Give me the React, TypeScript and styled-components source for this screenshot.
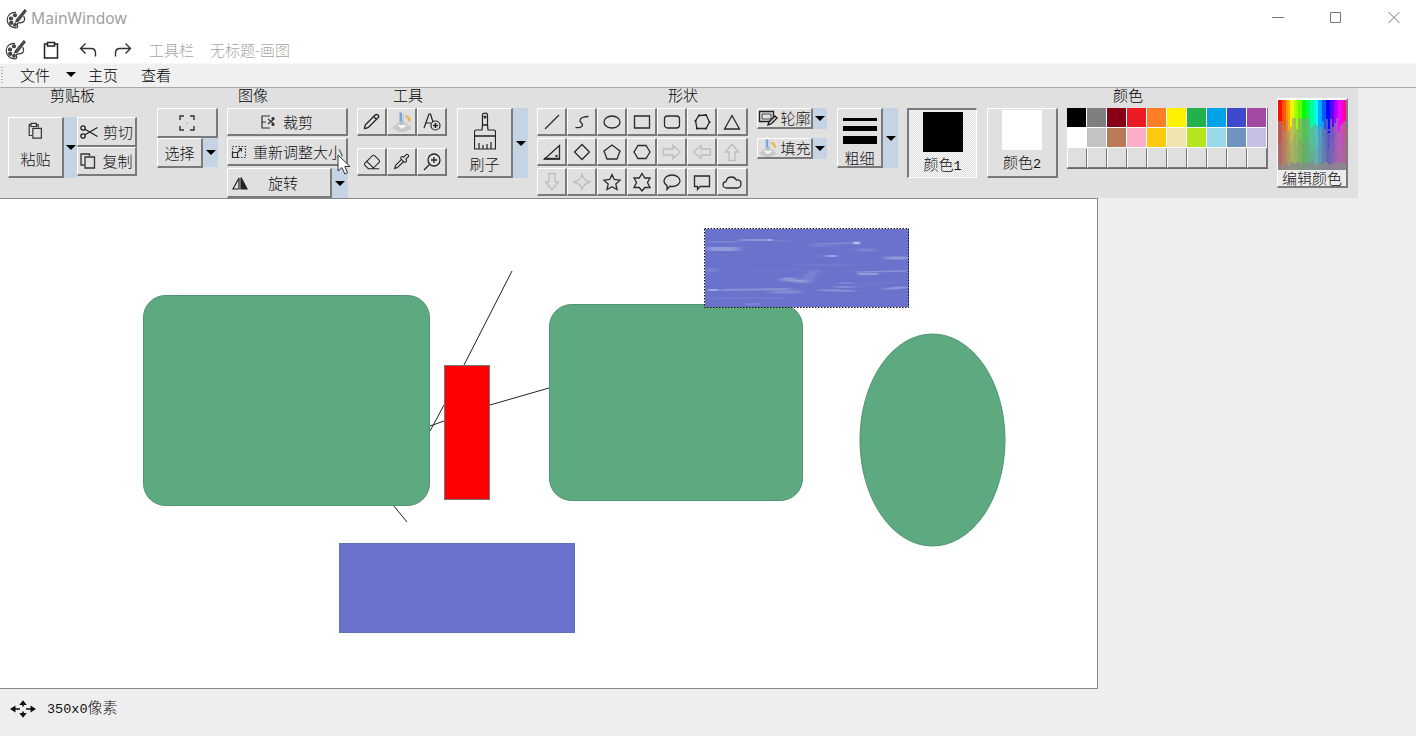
import React from "react";
import styled, { createGlobalStyle } from "styled-components";
import { Eraser, Pencil, Pipette } from "lucide-react";

const Global = createGlobalStyle`
  html, body { margin: 0; padding: 0; background: #eeeeee; }
  * { box-sizing: border-box; }
  body { font-family: "Noto Sans CJK SC", "Liberation Sans", sans-serif; font-size: 15px; font-weight: 300; color: #000; }
`;

const Page = styled.div`
  width: 1416px; height: 736px; overflow: hidden;
  display: flex; flex-direction: column; background: #eeeeee;
`;
const TitleBar = styled.header`
  height: 36px; background: #fff; display: flex; align-items: center;
  padding: 0 16px 0 6px; flex: none;
`;
const WinTitle = styled.span`
  font-family: "Noto Sans", "Liberation Sans", sans-serif; font-size: 15.6px; font-weight: 400;
  color: #a0a0a0; margin-left: 4px;
`;
const WinControls = styled.div`
  margin-left: auto; display: flex; gap: 46px; align-items: center; color: #777;
`;
const QuickBar = styled.div`
  height: 27px; background: #fff; display: flex; align-items: center; flex: none;
  padding-left: 5px;
`;
const QuickIcon = styled.span<{ $ml: number }>`
  display: flex; margin-left: ${p => p.$ml}px;
`;
const QuickText = styled.span<{ $ml: number }>`
  color: #a5a5a5; margin-left: ${p => p.$ml}px; line-height: 20px; white-space: nowrap; font-size: 15px;
`;
const MenuBar = styled.nav`
  height: 25px; background: #f0f0f0; border-bottom: 1px solid #a9a9a9; display: flex;
  align-items: center; flex: none; position: relative; padding: 0 0 2px 20px;
  border-top: 1px solid #f8f8f8;
`;
const Grip = styled.span`
  width: 2px; height: 16px; margin-left: -19px; margin-right: 17px;
  background: repeating-linear-gradient(to bottom, #b5b5b5 0 1px, transparent 1px 3px);
`;
const MenuItem = styled.span<{ $w: number }>`
  width: ${p => p.$w}px; display: flex; align-items: center; line-height: 20px; font-size: 15px; flex: none;
`;
const Arrow = styled.i`
  display: block; width: 0; height: 0; flex: none;
  border-left: 5px solid transparent; border-right: 5px solid transparent; border-top: 5px solid #000;
`;
const MenuArrow = styled(Arrow)`
  margin-left: 16px;
`;
const Ribbon = styled.section`
  width: 1358px; height: 110px; background: #e1e0e1; display: flex; padding-left: 8px; flex: none;
`;
const Group = styled.div<{ $w: number; $top?: number }>`
  width: ${p => p.$w}px; flex: none; padding-top: ${p => p.$top ?? 0}px;
`;
const GroupTitle = styled.div<{ $x?: number }>`
  height: 14px; line-height: 14px; margin-bottom: 6px; margin-left: ${p => p.$x ?? 0}px;
  font-size: 15px; white-space: nowrap;
`;
const Btn = styled.div<{ $w: number; $h: number; $col?: boolean; $gap?: number; $pt?: number }>`
  width: ${p => p.$w}px; height: ${p => p.$h}px; flex: none;
  display: flex; flex-direction: ${p => (p.$col ? "column" : "row")};
  align-items: center; justify-content: ${p => (p.$pt !== undefined ? "flex-start" : "center")};
  padding-top: ${p => p.$pt ?? 0}px; gap: ${p => p.$gap ?? 0}px;
  background: #e1e0e1; line-height: 18px; white-space: nowrap; font-size: 15px;
  border-top: 1px solid #fff; border-left: 1px solid #fff;
  border-right: 2px solid #7a7a7a; border-bottom: 2px solid #7a7a7a;
  color: #111;
  position: relative;
`;
const Drop = styled.div<{ $w?: number; $h: number }>`
  width: ${p => p.$w ?? 15}px; height: ${p => p.$h}px; flex: none; background: #c5d4e4;
  display: flex; align-items: center; justify-content: center;
`;
const Row = styled.div<{ $gap?: number; $mt?: number }>`
  display: flex; gap: ${p => p.$gap ?? 0}px; padding-top: ${p => p.$mt ?? 0}px;
`;
const Stack = styled.div<{ $gap?: number }>`
  display: flex; flex-direction: column; gap: ${p => p.$gap ?? 0}px;
`;
const RotateLabel = styled.span`
  margin-left: 20px;
`;
const RotateBtn = styled(Btn)`
  justify-content: flex-start; padding-left: 4px;
`;
const CursorMark = styled.svg`
  position: absolute; left: 109px; top: 15px; z-index: 3;
`;
const Mono = styled.span`
  font-family: "Liberation Mono", monospace; font-size: 13.5px; font-weight: 400;
`;
const ColorBtn = styled.div<{ $on?: boolean }>`
  width: ${p => (p.$on ? 70 : 71)}px; height: 70px; display: flex; flex-direction: column; align-items: center;
  line-height: 18px; font-size: 15px; color: #111;
  ${p => p.$on
    ? `border-top: 2px solid #7a7a7a; border-left: 2px solid #7a7a7a; border-right: 1px solid #fff; border-bottom: 1px solid #fff;
       background: repeating-conic-gradient(#fff 0 25%, #dadada 0 50%) 0 0 / 2px 2px; padding-top: 2px;`
    : `border-top: 1px solid #fff; border-left: 1px solid #fff; border-right: 2px solid #7a7a7a; border-bottom: 2px solid #7a7a7a;
       background: #e1e0e1; padding-top: 1px;`}
`;
const ColorFill = styled.div<{ $c: string }>`
  width: 40px; height: 40px; background: ${p => p.$c}; margin-bottom: 3px; flex: none;
`;
const Palette = styled.div`
  width: 201px; display: grid; grid-template-columns: repeat(10, 20px); grid-auto-rows: 20px;
  border-bottom: 1px solid #666; height: 61px; border-right: 1px solid #777;
`;
const Swatch = styled.div<{ $c: string; $blank?: boolean }>`
  background: ${p => p.$c};
  border-right: 1px solid #fff; border-bottom: 1px solid #fff;
  ${p => p.$blank && "border-left: 1px solid #fff; border-top: 1px solid #e0dfe0; border-right: 1px solid #777; border-bottom: 1px solid #777;"}
`;
const EditBtn = styled.div`
  width: 71px; height: 90px; background: #e1e0e1; display: flex; flex-direction: column;
  border-top: 2px solid #fff; border-left: 1px solid #fff; border-right: 2px solid #7a7a7a; border-bottom: 2px solid #7a7a7a;
`;
const RainbowImg = styled.svg`
  display: block; flex: none;
`;
const EditLabel = styled.div`
  flex: 1; text-align: center; line-height: 16px; font-size: 15px; color: #111; background: #ececec;
`;
const Canvas = styled.main`
  width: 1098px; height: 491px; background: #fff; flex: none;
  border-top: 1px solid #8a8a8a; border-right: 1px solid #8a8a8a; border-bottom: 1px solid #8a8a8a;
`;
const Drawing = styled.svg`
  display: block;
`;
const StatusBar = styled.footer`
  flex: 1; display: flex; align-items: center; padding: 0 0 8px 10px; background: #eeeeee; font-size: 15px; color: #111;
`;
const StatusText = styled.span`
  margin-left: 11px; line-height: 20px;
`;
const Lines = styled.svg`
  display: block; flex: none;
`;

const S = "#2a2a2a";
const G = "#bcbcbc";

const AppIcon = ({ size = 21 }: { size?: number }) => (
  <svg width={size} height={size} viewBox="0 0 21 21" fill="none" stroke="#3a3a3a" strokeWidth="1.200">
    <path d="M10 4.500C5 3.800 1.200 7.200 1.200 11.800c0 4.500 3.800 8 8.300 8 2 0 2.600-1.200 2-2.500-.6-1.500.3-2.600 1.800-2.500 2.800.2 5.300-.8 5.300-3.600 0-1.200-.4-2.200-1-3" fill="#f7f7f7" />
    <circle cx="5" cy="10.500" r="1.500" fill="#555" />
    <circle cx="5.200" cy="14.800" r="1.500" fill="#555" />
    <circle cx="9" cy="7.300" r="1.400" fill="#555" />
    <circle cx="9" cy="16.800" r="1.300" fill="#555" />
    <path d="M10.500 11.800 18.800 1.800l1.300 1.200-7.700 10-2.600.9z" fill="#666" />
  </svg>
);

const dots = (pts: [number, number][]) => <>{pts.map(([x, y], i) => <circle key={i} cx={x} cy={y} r="1.100" fill="#222" stroke="none" />)}</>;

const shapeIcons: { d: string; muted?: boolean; extra?: React.ReactNode }[] = [
  { d: "M3 17 17 3" },
  { d: "M3.500 15.500c3 .5 7 0 7-2.500 0-2-2.500-2-2.500-4.500C8 6 12 4.500 16.500 4.500" },
  { d: "M2 10a8 6 0 1 0 16 0a8 6 0 1 0-16 0z" },
  { d: "M2.500 4h15v12h-15z" },
  { d: "M5.500 4h9a3 3 0 0 1 3 3v6a3 3 0 0 1-3 3h-9a3 3 0 0 1-3-3V7a3 3 0 0 1 3-3z" },
  { d: "M7 3.500 14 3 17.500 10 14 16.500 5 16.500 3.500 9z", extra: dots([[7, 3.5], [14, 3], [17.5, 10], [14, 16.5], [5, 16.5], [3.5, 9]]) },
  { d: "M10 3.500 17.500 17h-15z" },
  { d: "M17.500 3.500v13.500H2.500z", extra: <><path d="M2 16.700h16" strokeWidth="1.800" /><circle cx="14.500" cy="14" r="1.300" fill="#444" stroke="none" /></> },
  { d: "M10 2.500 17.500 10 10 17.500 2.500 10z" },
  { d: "M10 3 18 9 15 17H5L2 9z" },
  { d: "M6 3.500h8L18 10l-4 6.500H6L2 10z" },
  { d: "M1.500 7h9.500V3.500L18.500 10 11 16.500V13H1.500z", muted: true },
  { d: "M18.500 7H9V3.500L1.500 10 9 16.500V13h9.500z", muted: true },
  { d: "M7 18.500V10H3.500L10 2l6.500 8H13v8.500z", muted: true },
  { d: "M7 1.500V10H3.500L10 18l6.500-8H13V1.500z", muted: true },
  { d: "M10 1.500Q11 9 18.500 10 11 11 10 18.500 9 11 1.500 10 9 9 10 1.500z", muted: true },
  { d: "M10 2.500 12.300 7.500 18 8.200 13.800 12 15 17.500 10 14.800 5 17.500 6.200 12 2 8.200 7.700 7.500z" },
  { d: "M10 1.500 12.800 6H18L15.500 10.500 18 15.500H12.800L10 19 7.200 15.500H2L4.500 10.500 2 6H7.200z" },
  { d: "M10 3c4.500 0 8 2.500 8 5.800 0 3.200-3.500 5.700-8 5.700-.8 0-1.500 0-2.200-.2L5 17.500v-4C3 12.400 2 10.800 2 8.800 2 5.500 5.500 3 10 3z" },
  { d: "M2.500 4h15v10.500H8L5.500 17.500v-3h-3z" },
  { d: "M4.500 16C2.500 16 1 14.500 1 12.800c0-1.700 1.300-3 3-3.100.5-2.700 2.800-4.700 5.500-4.700 2.200 0 4 1.200 4.800 3 .4-.1.800-.1 1.200-.1 2.200 0 3.500 1.700 3.500 3.900 0 2.300-1.500 4.200-3.500 4.200z" },
];

const ShapeIcon = ({ d, muted, extra }: { d: string; muted?: boolean; extra?: React.ReactNode }) => (
  <svg width="20" height="20" viewBox="0 0 20 20" fill="none" stroke={muted ? G : S} strokeWidth="1.300">
    <path d={d} />
    {extra}
  </svg>
);

const FillIcon = ({ w = 22 }: { w?: number }) => (
  <svg width={w} height={w} viewBox="0 0 22 22" fill="none">
    <path d="M1 17 7 12h8l6 5-7 4H8z" fill="#c9c9c9" />
    <path d="M6 14h10l-5 4z" fill="#f6f6f6" />
    <path d="M8.500 1.500H11V10H8.500z" fill="#7fa4d8" />
    <path d="M11 2.500h2V10h-2z" fill="#c3d2e8" />
    <path d="M14.500 5c2.500.8 4 2.800 4.300 5.500" stroke="#e9b94a" strokeWidth="2.400" />
    <path d="M7.500 10h6l-3 4z" fill="#aeb9ca" />
  </svg>
);

function hash(n: number) {
  const x = Math.sin(n * 127.1 + 11.7) * 43758.5453;
  return x - Math.floor(x);
}
const rainbowCells: { x: number; y: number; c: string }[] = [];
for (let cx = 0; cx < 34; cx++) {
  const jitter = (hash(cx) - 0.5) * 0.24;
  for (let cy = 0; cy < 36; cy++) {
    const t = cy / 36 + jitter + (hash(cx * 100 + Math.floor(cy / 4)) - 0.5) * 0.08;
    const hue = (Math.floor(cx / 2) * 2 / 34) * 340 + (hash(cx + 50) - 0.5) * 10;
    const bottom = cy / 36 > 0.92 - hash(cx + 300) * 0.06;
    const sat = bottom ? 6 : t < 0.34 ? 98 : t < 0.62 ? 46 : 33;
    const light = bottom ? 54 : t < 0.34 ? 50 : 54;
    rainbowCells.push({ x: cx * 2, y: cy * 2, c: `hsl(${hue.toFixed(0)} ${sat}% ${light}%)` });
  }
}

const colors = [
  "#000000", "#7f7f7f", "#880015", "#ed1c24", "#ff7f27", "#fff200", "#22b14c", "#00a2e8", "#3f48cc", "#a349a4",
  "#ffffff", "#c3c3c3", "#b97a57", "#ffaec9", "#ffc90e", "#efe4b0", "#b5e61d", "#99d9ea", "#7092be", "#c8bfe7",
];

const soft: [number, number, number, number, number, number][] = [
  [706, 242, 738, 242, 2, 0.15], [740, 240, 772, 240, 1.5, 0.45], [772, 241, 790, 241, 1, 0.15],
  [708, 249, 738, 249, 4, 0.4], [815, 244, 853, 243, 1.5, 0.25],
  [806, 246, 836, 246, 1, 0.2], [826, 256, 835, 256, 2, 0.5], [857, 250, 875, 250, 3, 0.2],
  [886, 258, 908, 258, 3, 0.4], [856, 272, 908, 271, 1.5, 0.3], [782, 279, 806, 282, 3, 0.4], [805, 282, 815, 270, 4, 0.35],
  [720, 290, 790, 289, 2, 0.3], [770, 292, 800, 292, 3, 0.25], [820, 290, 854, 291, 2, 0.3], [835, 287, 854, 287, 2, 0.25],
  [885, 289, 908, 287, 2, 0.4], [710, 298, 790, 298, 1, 0.12], [706, 270, 716, 270, 4, 0.2], [800, 265, 854, 265, 1, 0.15],
  [840, 283, 854, 283, 1.5, 0.25], [745, 270, 800, 270, 1, 0.1], [860, 285, 900, 282, 1, 0.12],
];
const bright: [number, number, number, number, number, number][] = [
  [767, 240, 771, 240, 1, 0.8], [853, 243, 860, 243, 2.500, 0.6], [830, 256, 835, 256, 1, 0.4], [858, 274, 878, 274, 1, 0.65],
  [784, 278, 795, 278, 1, 0.25], [708, 290, 718, 290, 1, 0.8], [746, 304, 760, 304, 1, 0.3],
];

export default function App() {
  return (
    <Page>
      <Global />
      <TitleBar>
        <AppIcon />
        <WinTitle>MainWindow</WinTitle>
        <WinControls>
          <svg width="12" height="12" viewBox="0 0 12 12" stroke="currentColor"><path d="M0 5.500h12" /></svg>
          <svg width="12" height="12" viewBox="0 0 12 12" fill="none" stroke="currentColor"><path d="M.5 .500h10v10H.5z" /></svg>
          <svg width="12" height="12" viewBox="0 0 12 12" fill="none" stroke="currentColor"><path d="M.5 0 11.500 11M11.500 0 .5 11" /></svg>
        </WinControls>
      </TitleBar>
      <QuickBar>
        <AppIcon />
        <QuickIcon $ml={17}>
          <svg width="16" height="18" viewBox="0 0 16 18" fill="none" stroke="#222" strokeWidth="1.500">
            <path d="M4.500 3H1.500v14h13V3h-3" />
            <path d="M4.500 1.500h7V5h-7z" />
          </svg>
        </QuickIcon>
        <QuickIcon $ml={20}>
          <svg width="18" height="16" viewBox="0 0 18 16" fill="none" stroke="#333" strokeWidth="1.400">
            <path d="M6.500 1.500 1.500 6.500l5 5M1.500 6.500H12c2.800 0 4.500 1.800 4.500 4.500v3.500" />
          </svg>
        </QuickIcon>
        <QuickIcon $ml={17}>
          <svg width="18" height="16" viewBox="0 0 18 16" fill="none" stroke="#333" strokeWidth="1.400">
            <path d="M11.500 1.500l5 5-5 5M16.500 6.500H6C3.200 6.500 1.500 8.300 1.500 11v3.500" />
          </svg>
        </QuickIcon>
        <QuickText $ml={17}>工具栏</QuickText>
        <QuickText $ml={16}>无标题-画图</QuickText>
      </QuickBar>
      <MenuBar>
        <Grip />
        <MenuItem $w={68}>文件<MenuArrow /></MenuItem>
        <MenuItem $w={53}>主页</MenuItem>
        <MenuItem $w={40}>查看</MenuItem>
      </MenuBar>
      <Ribbon>
        <Group $w={149}>
          <GroupTitle $x={42}>剪贴板</GroupTitle>
          <Row $mt={9}>
            <Btn $w={56} $h={61} $col $gap={10} $pt={4}>
              <svg width="15" height="18" viewBox="0 0 16 20" fill="none" stroke="#333" strokeWidth="1.300">
                <path d="M3 3H1v12h3" /><path d="M3 1.500h6V5H3zM9 3h2v3" /><path d="M5 7h9.500v11H5z" />
              </svg>
              粘贴
            </Btn>
            <Drop $w={13} $h={61}><Arrow /></Drop>
            <Stack>
              <Btn $w={60} $h={30} $gap={5}>
                <svg width="18" height="14" viewBox="0 0 18 14" fill="none" stroke="#222" strokeWidth="1.300">
                  <circle cx="3" cy="3" r="2.200" />
                  <circle cx="3" cy="11" r="2.200" />
                  <path d="M5 4.300 17.500 11.500M5 9.700 17.500 2.500" />
                </svg>
                剪切
              </Btn>
              <Btn $w={60} $h={29} $gap={6}>
                <svg width="16" height="16" viewBox="0 0 16 16" fill="none" stroke="#333" strokeWidth="1.300">
                  <path d="M9.500 3V1H1v11h3" /><path d="M5 4h9.500v11H5z" />
                </svg>
                复制
              </Btn>
            </Stack>
          </Row>
        </Group>
        <Group $w={200}>
          <GroupTitle $x={81}>图像</GroupTitle>
          <Row $gap={9}>
            <Stack>
              <Btn $w={61} $h={30}>
                <svg width="16" height="16" viewBox="0 0 16 16" fill="none" stroke="#333" strokeWidth="1.400">
                  <path d="M1 5V1h4M11 1h4v4M15 11v4h-4M5 15H1v-4" />
                  <path d="M7.500 8h1" stroke="#999" />
                </svg>
              </Btn>
              <Row>
                <Btn $w={46} $h={30}>选择</Btn>
                <Drop $h={29}><Arrow /></Drop>
              </Row>
            </Stack>
            <Stack $gap={2}>
              <Btn $w={121} $h={28} $gap={8}>
                <svg width="14" height="14" viewBox="0 0 14 14" fill="none" stroke="#333" strokeWidth="1.200">
                  <path d="M9 1H1v12h8M1 7h4" />
                  <path d="m7 4 6 5M7 9l6-5" />
                  <circle cx="12" cy="3.500" r="1" fill="#333" /><circle cx="12" cy="9.500" r="1" fill="#333" />
                </svg>
                裁剪
              </Btn>
              <Btn $w={121} $h={28} $gap={6}>
                <svg width="16" height="14" viewBox="0 0 16 14" fill="none" stroke="#333" strokeWidth="1.200">
                  <path d="M1.500 1.500h13v11h-13z" strokeDasharray="1.500 1.500" />
                  <path d="M1.500 7.500h5v5h-5z" />
                  <path d="M6 8l4-4M7.500 3.500H10.500V6.500" />
                </svg>
                重新调整大小
                <CursorMark width="14" height="22" viewBox="0 0 14 22">
                  <path d="M1 1v16l4-3.500 2.800 6.500 2.700-1.200L7.800 12.500H13z" fill="#fff" stroke="#333" strokeWidth="1" />
                </CursorMark>
              </Btn>
              <Row>
                <RotateBtn $w={105} $h={30}>
                  <svg width="16" height="14" viewBox="0 0 16 14" fill="none" stroke="#222" strokeWidth="1.200">
                    <path d="M7 2v11H1z" />
                    <path d="M9 1.500V13h6z" fill="#222" />
                  </svg>
                  <RotateLabel>旋转</RotateLabel>
                </RotateBtn>
                <Drop $w={16} $h={30}><Arrow /></Drop>
              </Row>
            </Stack>
          </Row>
        </Group>
        <Group $w={100}>
          <GroupTitle $x={36}>工具</GroupTitle>
          <Stack $gap={12}>
            <Row>
              <Btn $w={30} $h={28}><Pencil size={17} color="#222" strokeWidth={1.800} /></Btn>
              <Btn $w={30} $h={28}><FillIcon /></Btn>
              <Btn $w={30} $h={28}>
                <svg width="20" height="20" viewBox="0 0 20 20" fill="none" stroke="#222" strokeWidth="1.200">
                  <path d="M2 16 7 2h1.500L11 10M4 11h5" />
                  <circle cx="13.500" cy="13.500" r="4.500" />
                  <path d="M11 13.500h5M13.500 11v5" strokeWidth="1.600" />
                </svg>
              </Btn>
            </Row>
            <Row>
              <Btn $w={30} $h={28}><Eraser size={18} color="#222" strokeWidth={1.400} /></Btn>
              <Btn $w={30} $h={28}><Pipette size={17} color="#222" strokeWidth={1.500} /></Btn>
              <Btn $w={30} $h={28}>
                <svg width="20" height="20" viewBox="0 0 20 20" fill="none" stroke="#222" strokeWidth="1.300">
                  <circle cx="12" cy="8" r="6" />
                  <path d="M7.500 12.500 2 18M9 8h6M12 5v6" />
                </svg>
              </Btn>
            </Row>
          </Stack>
        </Group>
        <Group $w={80}>
          <GroupTitle />
          <Row>
            <Btn $w={56} $h={70} $col $gap={5} $pt={3}>
              <svg width="22" height="38" viewBox="0 0 22 38" fill="none" stroke="#222" strokeWidth="1.200">
                <path d="M8.500 3c0-2.500 5-2.500 5 0v10h-5z" />
                <circle cx="11" cy="5" r="1" />
                <path d="M8.500 13h5l.5 5h6c1 0 1.500 1 1.500 2v4H.5v-4c0-1 .5-2 1.500-2h6z" />
                <path d="M.5 24h21v13H.5zM5 37v-6M9 37v-4M13 37v-5M17 37v-7" />
              </svg>
              刷子
            </Btn>
            <Drop $h={70}><Arrow /></Drop>
          </Row>
        </Group>
        <Group $w={220}>
          <GroupTitle $x={131}>形状</GroupTitle>
          <Stack $gap={2}>
            {[0, 7, 14].map(start => (
              <Row key={start}>
                {shapeIcons.slice(start, start + 7).map((ic, i) => (
                  <Btn key={i} $w={i === 6 ? 31 : 30} $h={28}><ShapeIcon {...ic} /></Btn>
                ))}
              </Row>
            ))}
          </Stack>
        </Group>
        <Group $w={80}>
          <GroupTitle />
          <Stack $gap={9}>
            <Row>
              <Btn $w={56} $h={21} $gap={2}>
                <svg width="20" height="18" viewBox="0 0 20 18" fill="none" stroke="#222" strokeWidth="1.400">
                  <path d="M1.500 2.500h14v10h-14z" /><path d="M4 5h9v5H4z" strokeWidth=".8" />
                  <path d="m10 16 1-3 6-6 2 2-6 6z" fill="#ddd" />
                </svg>
                轮廓
              </Btn>
              <Drop $w={14} $h={21}><Arrow /></Drop>
            </Row>
            <Row>
              <Btn $w={56} $h={21} $gap={2}><FillIcon w={20} />填充</Btn>
              <Drop $w={14} $h={21}><Arrow /></Drop>
            </Row>
          </Stack>
        </Group>
        <Group $w={70}>
          <GroupTitle />
          <Row>
            <Btn $w={46} $h={60} $col $gap={3} $pt={8}>
              <Lines width="34" height="29" viewBox="0 0 34 29" fill="#000">
                <path d="M0 1h34v3H0zM0 9h34v5H0zM0 19h34v8H0z" />
              </Lines>
              粗细
            </Btn>
            <Drop $h={60}><Arrow /></Drop>
          </Row>
        </Group>
        <Group $w={80}>
          <GroupTitle />
          <ColorBtn $on>
            <ColorFill $c="#000" />
            <span>颜色<Mono>1</Mono></span>
          </ColorBtn>
        </Group>
        <Group $w={80}>
          <GroupTitle />
          <ColorBtn>
            <ColorFill $c="#fff" />
            <span>颜色<Mono>2</Mono></span>
          </ColorBtn>
        </Group>
        <Group $w={210}>
          <GroupTitle $x={46}>颜色</GroupTitle>
          <Palette>
            {colors.map((c, i) => <Swatch key={i} $c={c} />)}
            {Array.from({ length: 10 }, (_, i) => <Swatch key={i} $c="#e0dfe0" $blank />)}
          </Palette>
        </Group>
        <Group $w={81} $top={10}>
          <EditBtn>
            <RainbowImg width="68" height="70" viewBox="0 0 68 72" preserveAspectRatio="none" shapeRendering="crispEdges">
              {rainbowCells.map((r, i) => <rect key={i} x={r.x} y={r.y} width="2" height="2" fill={r.c} />)}
            </RainbowImg>
            <EditLabel>编辑颜色</EditLabel>
          </EditBtn>
        </Group>
      </Ribbon>
      <Canvas>
        <Drawing width="1097" height="489" viewBox="0 199 1097 489">
          <defs>
            <filter id="smear" x="-10%" y="-30%" width="120%" height="160%">
              <feGaussianBlur stdDeviation="5 0.7" />
            </filter>
            <filter id="spark" x="-30%" y="-100%" width="160%" height="300%">
              <feGaussianBlur stdDeviation="1 0.4" />
            </filter>
          </defs>
          <path d="M512 271 464 365M444 405 430 431M549 388 490 405M444 421 430 426M393 505 407 522" stroke="#222" strokeWidth="1" fill="none" />
          <rect x="143.500" y="295.500" width="286" height="210" rx="22" fill="#5daa80" stroke="#4f9370" />
          <rect x="549.500" y="304.500" width="253" height="196" rx="22" fill="#5daa80" stroke="#4f9370" />
          <ellipse cx="932.500" cy="440" rx="72.500" ry="106" fill="#5daa80" stroke="#4f9370" />
          <rect x="444.500" y="365.500" width="45" height="134" fill="#ff0000" stroke="#777" />
          <rect x="339.500" y="543.500" width="235" height="89" fill="#6b72cb" stroke="#5a74b4" />
          <rect x="705" y="229" width="204" height="78" fill="#6b72cb" />
          <g filter="url(#smear)">
            {soft.map(([x1, y1, x2, y2, w, o], i) => (
              <line key={i} x1={x1} y1={y1} x2={x2} y2={y2} stroke="#cfdcf2" strokeWidth={w} strokeOpacity={o} />
            ))}
          </g>
          <g filter="url(#spark)">
            {bright.map(([x1, y1, x2, y2, w, o], i) => (
              <line key={i} x1={x1} y1={y1} x2={x2} y2={y2} stroke="#e6f6fa" strokeWidth={w} strokeOpacity={o} />
            ))}
          </g>
          <rect x="704.500" y="228.500" width="204" height="79" fill="none" stroke="#111" strokeDasharray="1.500 1.500" />
        </Drawing>
      </Canvas>
      <StatusBar>
        <svg width="26" height="18" viewBox="0 0 26 18" fill="#111" stroke="#111">
          <path d="M13 3.500v3M13 11.500v3M4 9h6M16 9h6" fill="none" strokeWidth="1.600" />
          <path d="M13 .200 16.800 5H9.200zM13 17.800 9.200 13h7.600zM0 9 5.500 5.500v7zM26 9 20.500 5.500v7z" stroke="none" />
        </svg>
        <StatusText><Mono>350x0</Mono>像素</StatusText>
      </StatusBar>
    </Page>
  );
}
